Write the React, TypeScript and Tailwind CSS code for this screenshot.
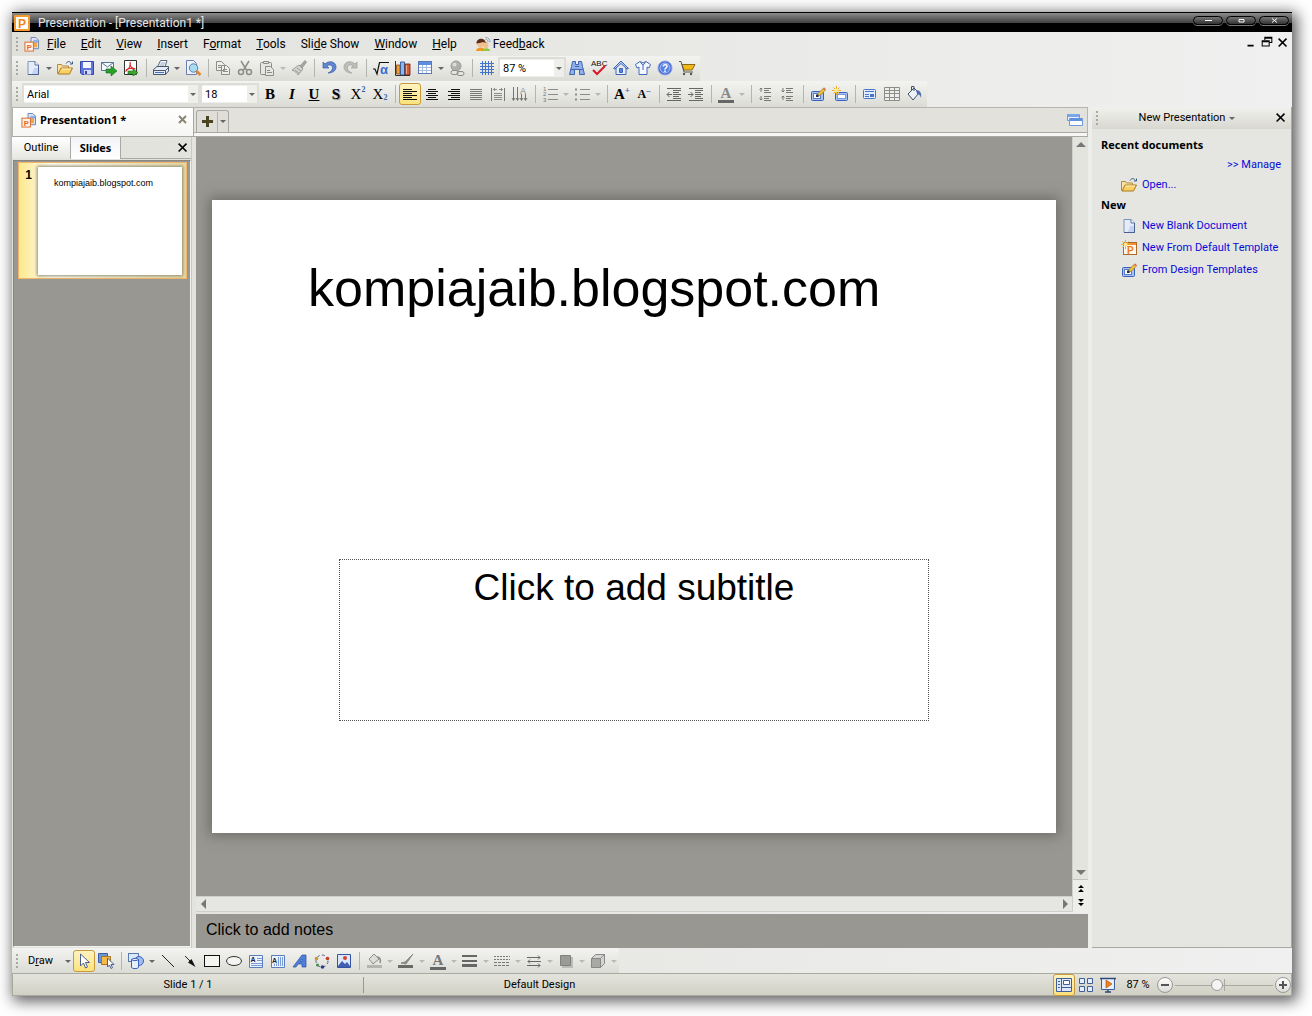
import { clsx } from "clsx";
import type { ReactNode } from "react";

const BLUE = "#3a62b8";
const GREY = "#8c8c88";

const documentShape = (
	<>
		<path d="M3 1.500h7l3.500 3.500v9.500H3z" fill="#e4ecfa" stroke="#8093b8" />
		<path d="M10 1.500V5h3.500" fill="#fff" stroke="#5a6f9e" />
		<path d="M9 8h4v6H7z" fill="#c3d3f0" />
		<path d="M3 14.500h10.500V5" fill="none" stroke="#4a5f8e" />
	</>
);

const folderShape = (
	<>
		<path d="M.5 13.500v-9h4l1 1.500h6v3" fill="#f8e2a4" stroke="#b48a3c" />
		<path d="M1 14L4 8h11.500L12.500 14z" fill="#fbd064" stroke="#a87a20" />
		<path d="M4.500 9h9.500" stroke="#fdeebc" />
		<path d="M9 3.500c1.500-2.500 4-2.500 5.500 0M15.500 1.500v2.500H13" fill="none" stroke="#3d5a80" />
	</>
);

const pencilSlide = (
	<>
		<rect x="1.500" y="5.500" width="12" height="9" rx="1" fill="#a9c2f4" stroke={BLUE} />
		<rect x="3.500" y="7.500" width="7" height="5" fill="#fff" stroke="#5a7cc8" />
		<path d="M7 10.500l1-3 5-5 2 2-5 5z" fill="#f3c23c" stroke="#9a7420" strokeWidth=".7" />
		<path d="M13 2.500l1-1.200 2 2L15 4.500z" fill="#e06a5a" />
		<path d="M6 8.500h2.500V11H6z" fill="#1c2c50" />
	</>
);

const bulb = (
	<>
		<path d="M4.500 0v9M0 4.500h9M1.500 1.500l6 6M7.500 1.500l-6 6" stroke="#e8ac28" />
		<circle cx="4.500" cy="4.500" r="2" fill="#ffe884" />
	</>
);

const icons: Record<string, ReactNode> = {
	app: (
		<>
			<path d="M7.500.5h5l3 3v9h-8z" fill="#dfe8f8" stroke="#6b7fae" />
			<path d="M8 5h6v6H8z" fill="#f4a640" />
			<path d="M10 3h5v3h-5z" fill="#8fb0e8" />
			<rect x="1" y="5.500" width="9" height="9.500" fill="#fff3e8" stroke="#d9662a" />
			<text x="3" y="13.500" fontSize="8" fontWeight="700" fill="#e06a20">P</text>
		</>
	),
	new: documentShape,
	open: folderShape,
	save: (
		<>
			<path d="M1.500 1.500h13v13H3l-1.500-1.500z" fill="#5f74dc" stroke="#3746a8" />
			<path d="M4 2h8v6H4z" fill="#f4f7ff" />
			<path d="M5 10h7v4.500H5z" fill="#d5dcf6" />
			<path d="M6 11h2v3H6z" fill="#3746a8" />
		</>
	),
	mail: (
		<>
			<path d="M.5 2.500h12v8H.5z" fill="#f4f7fc" stroke="#5a7496" />
			<path d="M.5 2.500l6 4.500 6-4.500" fill="none" stroke="#5a7496" />
			<path d="M5 9h5V6l6 5-6 5v-3H5z" fill="#28a028" stroke="#116a1a" strokeWidth=".6" />
		</>
	),
	pdf: (
		<>
			<path d="M1.500.5h12v14h-12z" fill="#fff" stroke="#333" />
			<path d="M7 2c1 3 0 6-4.500 9.500M7 4c0 3 2 4.500 5.500 5M3 10c2-1.500 5-2 9-1" fill="none" stroke="#d8282a" strokeWidth="1.200" />
			<path d="M5 11h5V9l5 3.500-5 3.500v-2H5z" fill="#40a830" stroke="#116a1a" strokeWidth=".6" />
		</>
	),
	print: (
		<>
			<path d="M4.500 7l3-6.500h6.500L12 7z" fill="#fff" stroke="#5c6a80" />
			<path d="M7.500 3h5M6.500 5h5" stroke="#8fa0b8" />
			<path d="M.5 9.500L4 6.500h11.500v4.500l-3 3.500H.5z" fill="#e6ebf4" stroke="#48566c" />
			<path d="M1 10.500h11.500l3-3M12.500 10.500v4" fill="none" stroke="#48566c" />
			<path d="M2 12.500h9" stroke="#3f73c8" />
		</>
	),
	preview: (
		<>
			<path d="M1.500.5h7l3 3v11h-10z" fill="#edf2fb" stroke="#6b7fae" />
			<circle cx="8.500" cy="8" r="4.200" fill="#a8dcf2" stroke="#5d7da4" />
			<path d="M11.500 11l4 4" stroke="#e08428" strokeWidth="2.500" />
		</>
	),
	copy: (
		<g fill="#eeeeeb" stroke={GREY}>
			<path d="M1.500 1.500h5l3 3v6h-8zM6.500 5.500h5l3 3v6h-8z" />
			<path d="M3 5.500h3M3 7.500h3M8 9.500h4M8 11.500h5" />
		</g>
	),
	cut: (
		<g fill="none" stroke={GREY} strokeWidth="1.500">
			<path d="M4 1l5.500 9M12 1L6.500 10" />
			<circle cx="4" cy="12" r="2.500" />
			<circle cx="12" cy="12" r="2.500" />
		</g>
	),
	paste: (
		<g fill="#e6e6e2" stroke={GREY}>
			<rect x="1.500" y="2.500" width="11" height="12" rx="1" />
			<path d="M4.500 3.500v-2h5v2zM6.500 6.500h5l3 3v6h-8z" />
			<path d="M8 10.500h3M8 12.500h5" />
		</g>
	),
	brush: (
		<g stroke={GREY} strokeWidth=".8">
			<path d="M9 6l5-5.500 1.500 1.500L11 8z" fill="#a8a8a4" />
			<path d="M1 10l7-5 4 4-5 6c-1-2-3-4-6-5z" fill="#d4d4d0" />
			<path d="M4 10l4 3M6 8l4 3" />
		</g>
	),
	undo: (
		<path d="M2 2v6h6L6 6c2-2 6-1 5.500 2.500C11 11 9 12 7 13c5 0 8-2.500 8-6C15 1.500 8 0 4 4z" fill="#5f86cf" stroke="#3a5fa8" strokeWidth=".7" />
	),
	redo: (
		<path d="M14 2v6H8l2-2C8 4 4 5 4.500 8.500 5 11 7 12 9 13c-5 0-8-2.500-8-6C1 1.500 8 0 12 4z" fill="#bdbdb9" stroke="#a0a09c" strokeWidth=".7" />
	),
	math: (
		<>
			<path d="M0 9h2l2 5L6.500 2.500H16" fill="none" stroke="#111" strokeWidth="1.200" />
			<text x="7" y="14" fontSize="13" fontWeight="700" fill="#3a6fd0">α</text>
		</>
	),
	chart: (
		<>
			<path d="M1.500 5h3.500V14H1.500z" fill="#f0a030" stroke="#8c4a14" strokeWidth=".8" />
			<path d="M5.500 2h4v13h-4z" fill="#8ab8f0" stroke="#24488c" strokeWidth=".8" />
			<path d="M10 4h5v11h-5z" fill="#d4583a" stroke="#6a2010" strokeWidth=".8" />
			<path d="M.5 1v14.500H15" fill="none" stroke="#333" />
			<path d="M11.500 5v9" stroke="#f2a880" />
		</>
	),
	table: (
		<>
			<rect x="1.500" y="1.500" width="13" height="12" fill="#fff" stroke="#5a78b8" />
			<path d="M2 2h12v3H2z" fill="#5d8ee0" />
			<path d="M2 7.500h12M2 10.500h12M5.500 5v8M9.500 5v8" stroke="#a9bde2" />
		</>
	),
	link: (
		<>
			<circle cx="7" cy="6" r="5" fill="#b0b0ac" stroke="#9c9c98" />
			<circle cx="5.500" cy="4.500" r="2" fill="#dcdcd8" />
			<rect x="2" y="10.500" width="7" height="4" rx="2" fill="#e6e6e2" stroke={GREY} />
			<rect x="8" y="11.500" width="7" height="4" rx="2" fill="none" stroke={GREY} />
		</>
	),
	grid: (
		<path d="M3.500 1v14M6.500 1v14M9.500 1v14M12.500 1v14M1 3.500h14M1 6.500h14M1 9.500h14M1 12.500h14" stroke="#4474c8" />
	),
	find: (
		<g fill="#8fb0ea" stroke="#3f65ae">
			<path d="M3.500 1.500h3v3h3v-3h3l1 5 2 8h-5v-5h-5v5h-5l2-8z" />
			<path d="M2 9.500h4M10 9.500h4M6 6.500h4" />
		</g>
	),
	spelling: (
		<>
			<text x="0" y="6" fontSize="8" fill="#111">ABC</text>
			<path d="M2 10l4 4 8-8" fill="none" stroke="#d81828" strokeWidth="2" />
		</>
	),
	home: (
		<g stroke="#3f65b8">
			<path d="M3 7.500v7h10v-7" fill="#e6effd" />
			<path d="M.5 8.500L8 1l7.500 7.500-1.500.5-6-5.500L2 9z" fill="#b4ccf8" />
			<path d="M6.500 8.500h3v4h-3z" fill="#5b84d8" />
		</g>
	),
	shirt: (
		<>
			<path d="M5 1.500L.5 4.500 2 8l2-1v7.500h8V7l2 1 1.500-3.500-4.500-3L8 3z" fill="#f4f8ff" stroke="#4469b8" />
			<path d="M5.500 2L8 5.500 10.500 2M8 5.500V10" fill="none" stroke="#4469b8" />
		</>
	),
	help: (
		<>
			<circle cx="8" cy="8" r="7" fill="#3f63cf" stroke="#8ba4e8" />
			<circle cx="8" cy="8" r="5" fill="#5b80e4" stroke="#b4c6f6" />
			<text x="5" y="11.500" fontSize="10" fontWeight="700" fill="#fff">?</text>
		</>
	),
	cart: (
		<>
			<path d="M3 4.500h13L13 10H5z" fill="#f2b818" stroke="#8a6a18" />
			<path d="M0 1.500h2L5 12h9" fill="none" stroke="#555" />
			<circle cx="5" cy="14" r="1.200" fill="#555" />
			<circle cx="12" cy="14" r="1.200" fill="#555" />
		</>
	),
	feedback: (
		<>
			<path d="M0 15c0-5 10-5 10 0z" fill="#f09820" />
			<path d="M7 15c0-4 8-4 8 0z" fill="#8cc83c" />
			<circle cx="5" cy="7" r="4" fill="#f2c090" />
			<circle cx="10.500" cy="9" r="2.800" fill="#f2c090" />
			<path d="M.5 7C0 1 9 0 10 5l2 1.500c-3-1-5-1-7-.5z" fill="#5c2c18" />
			<path d="M10 2.500c2 0 3 1.500 3 3M10 .5c3.500 0 5 2.500 5 5" fill="none" stroke="#8a9ab0" />
		</>
	),
	alignLeft: <path d="M1 3.500h9M1 5.500h14M1 7.500h9M1 9.500h14M1 11.500h9M1 13.500h14" stroke="#111" />,
	alignCenter: <path d="M4 3.500h8M2 5.500h12M4 7.500h8M2 9.500h12M4 11.500h8M2 13.500h12" stroke="#111" />,
	alignRight: <path d="M5 3.500h9M2 5.500h12M5 7.500h9M2 9.500h12M5 11.500h9M2 13.500h12" stroke="#111" />,
	justify: <path d="M2 3.500h12M2 5.500h12M2 7.500h12M2 9.500h12M2 11.500h12M2 13.500h12" stroke="#777" />,
	distribute: (
		<>
			<path d="M1.500 2v13M14.500 2v13" stroke="#777" />
			<path d="M3 3.500h4M9 3.500h4M4.500 2v3M11.500 2v3M4 7.500h8M4 9.500h8M4 11.500h8M4 13.500h8" stroke={GREY} />
		</>
	),
	vertical: (
		<>
			<path d="M1.500 1v13M5.500 1v13M9.500 8v6M13.500 8v6" stroke="#777" />
			<path d="M0 12l1.500 2.500L3 12M4 12l1.500 2.500L7 12M8 12l1.500 2.500L11 12M12 12l1.500 2.500L15 12" fill="none" stroke="#777" />
			<text x="8" y="7.500" fontSize="9" fill={GREY}>A</text>
		</>
	),
	numbered: (
		<>
			<path d="M6 3.500h10M6 8.500h10M6 13.500h10" stroke={GREY} />
			<text x="1" y="5" fontSize="6" fill="#777">1</text>
			<text x="1" y="10" fontSize="6" fill="#777">2</text>
			<text x="1" y="15.500" fontSize="6" fill="#777">3</text>
		</>
	),
	bullets: (
		<>
			<path d="M6 3.500h10M6 8.500h10M6 13.500h10" stroke={GREY} />
			<path d="M1 2.500h2v2H1zM1 7.500h2v2H1zM1 12.500h2v2H1z" fill={GREY} />
		</>
	),
	outdent: (
		<path d="M1 2.500h14M7 4.500h8M7 6.500h6M7 8.500h8M7 10.500h6M7 12.500h8M1 14.500h14M1 8.500h5M3.500 6L1 8.500 3.500 11" fill="none" stroke="#666" />
	),
	indent: (
		<path d="M1 2.500h14M7 4.500h8M7 6.500h6M7 8.500h8M7 10.500h6M7 12.500h8M1 14.500h14M0 8.500h5M2.500 6L5 8.500 2.500 11" fill="none" stroke="#666" />
	),
	spaceUp: (
		<path d="M6 2.500h7M6 4.500h5M6 6.500h7M6 10.500h7M6 12.500h5M6 14.500h7M3 2v4M1.500 3.500L3 2l1.500 1.500M3 10v4M1.500 12.500L3 14l1.500-1.500" fill="none" stroke="#777" />
	),
	spaceDown: (
		<path d="M6 2.500h7M6 4.500h5M6 6.500h7M6 10.500h7M6 12.500h5M6 14.500h7M3 2v4M1.500 4.500L3 6l1.500-1.500M3 10v4M1.500 11.500L3 10l1.500 1.500" fill="none" stroke="#777" />
	),
	design: pencilSlide,
	newSlide: (
		<>
			<rect x="3.500" y="6.500" width="12" height="8" rx="1" fill="#a9c2f4" stroke={BLUE} />
			<rect x="5.500" y="8.500" width="8" height="4" fill="#fff" stroke="#7a98d8" />
			{bulb}
		</>
	),
	layout: (
		<>
			<rect x="1.500" y="3.500" width="12" height="9" rx="1" fill="#e2ecfd" stroke="#4a74cc" />
			<path d="M3 5.500h9M3 8.500h4M3 10.500h4" stroke="#4a74cc" />
			<path d="M8 8h4v3H8z" fill="#4a74cc" />
		</>
	),
	tableGrey: (
		<path d="M.5 1.500h15v13H.5zM1 4.500h14M1 7.500h14M1 11.500h14M5.500 1v13M10.500 1v13" fill="#eeeeec" stroke={GREY} />
	),
	bucket: (
		<>
			<path d="M2 8l6-6 5 5-6 7z" fill="#eef3fb" stroke="#3f5068" />
			<path d="M8 5V.5H5.500V5" fill="none" stroke="#3f5068" />
			<path d="M10 4c4 0 6 3 5 8-1-3-2-4-4-4z" fill="#4c6fa8" />
		</>
	),
	cursor: (
		<path d="M4.500 1v12l3-3 2 5 2-1-2-4.500h4z" fill="#fff" stroke="#4a5f8c" />
	),
	selectObjects: (
		<>
			<path d="M.5.5h9v9h-9z" fill="#6d94d4" stroke="#3a5f9e" />
			<path d="M3.500 3.500h9v8h-9z" fill="#f5bb4a" stroke="#a87420" />
			<path d="M9.500 5v9l2-2 1.500 3.500 1.500-.8-1.500-3.200H16z" fill="#fff" stroke="#4a5f8c" />
		</>
	),
	shapes: (
		<>
			<rect x=".5" y=".5" width="10" height="8" fill="#dbe6f9" stroke="#5878b0" />
			<circle cx="11" cy="8" r="4.500" fill="#9fbcf0" stroke={BLUE} />
			<path d="M3.500 6.500v8c1 1.500 6 1.500 7 0v-8c-1-1.500-6-1.500-7 0z" fill="#e6eefc" stroke={BLUE} />
			<path d="M3.500 6.500c1 1.500 6 1.500 7 0" fill="none" stroke={BLUE} />
		</>
	),
	line: <path d="M2 2l12 12" stroke="#222" />,
	arrow: (
		<>
			<path d="M3 3l9 9" stroke="#222" />
			<path d="M13.500 14L6 9.500 9.500 6z" fill="#111" />
		</>
	),
	rect: <rect x=".5" y="2.500" width="15" height="11" fill="#f4f4f2" stroke="#111" />,
	ellipse: <ellipse cx="8" cy="8" rx="7.500" ry="4.500" fill="#f4f4f2" stroke="#333" />,
	textbox: (
		<>
			<path d="M1.500 2.500h13v12h-13z" fill="#edf3fd" stroke="#5a7cc0" />
			<path d="M9 5.500h5M9 7.500h5M3 10.500h11M3 12.500h11" stroke="#7a9ad8" />
			<text x="2.500" y="9" fontSize="7" fontWeight="700" fill="#223">A</text>
		</>
	),
	textboxVertical: (
		<>
			<path d="M1.500 2.500h13v12h-13z" fill="#edf3fd" stroke="#5a7cc0" />
			<path d="M8.500 4v9M10.500 4v9M12.500 4v9M4.500 10.500v2.500M6.500 10.500v2.500" stroke="#7a9ad8" />
			<text x="2" y="9.500" fontSize="7" fontWeight="700" fill="#223">A</text>
		</>
	),
	wordArt: (
		<path d="M1 14L10 2h4v12h-4v-3H6l-2 3zM8 8.500h2V6z" fill="#5080dc" stroke="#2a4c9e" strokeWidth=".7" fillRule="evenodd" />
	),
	diagram: (
		<>
			<circle cx="8" cy="8" r="6" fill="none" stroke="#4a5f8c" strokeDasharray="3 2.500" />
			<circle cx="2.500" cy="5.500" r="1.800" fill="#c89830" />
			<circle cx="13.500" cy="5.500" r="1.800" fill="#c83c28" />
			<circle cx="3.500" cy="12" r="1.500" fill="#4a8850" />
			<circle cx="8.500" cy="14" r="1.800" fill="#283c8c" />
		</>
	),
	picture: (
		<>
			<path d="M1.500 1.500h13v13h-13z" fill="#dbe7fb" stroke="#3553a4" />
			<path d="M2 13l4-5 3 3 2-2 3 4v1H2z" fill="#3f5fb0" />
			<circle cx="9" cy="5" r="2" fill="#d84030" />
		</>
	),
	fillGrey: (
		<>
			<path d="M3 6l5-5 5 5-6 5z" fill="#dcdcd8" stroke={GREY} />
			<path d="M11 4c3 0 4 3 3 6" fill="none" stroke={GREY} strokeWidth="1.500" />
			<path d="M1 12h15v3H1z" fill="#b4b4b0" />
		</>
	),
	penGrey: (
		<>
			<path d="M3 10l4-1 8-8-7 10z" fill={GREY} stroke={GREY} />
			<path d="M0 12h15v3H0z" fill="#6a6a66" />
		</>
	),
	lineWidth: (
		<>
			<path d="M0 3h15M0 8h15" stroke="#666" strokeWidth="2" />
			<path d="M0 12.500h15" stroke="#666" strokeWidth="3" />
		</>
	),
	dashes: (
		<>
			<path d="M0 3.500h16M0 6.500h16" stroke="#777" strokeDasharray="2 1" />
			<path d="M0 9.500h16M0 12.500h16" stroke="#777" strokeDasharray="3 1" />
		</>
	),
	arrows: (
		<path d="M1 4.500h13M12 2.500l2 2-2 2M15 8.500H2M4 6.500l-2 2 2 2M1 12.500h13M12 10.500l2 2-2 2" fill="none" stroke="#666" />
	),
	shadow: (
		<>
			<path d="M4 4h11v11H4z" fill="#bbbbb7" />
			<path d="M2.500 2.500h10v10h-10z" fill="#9a9a96" stroke="#808080" />
		</>
	),
	cube: (
		<>
			<path d="M1.500 5.500l4-4h9v9l-4 4h-9z" fill="#d4d4d0" stroke="#888" />
			<path d="M1.500 5.500h9v9h-9z" fill="#a8a8a4" stroke="#888" />
			<path d="M10.500 5.500l4-4" stroke="#888" />
		</>
	),
	template: (
		<>
			<rect x="2.500" y="2.500" width="13" height="12" fill="#fff8ec" stroke="#b06a28" />
			<path d="M3 3h12v2H3z" fill="#f09030" />
			<text x="6" y="13.500" fontSize="10" fontWeight="700" fill="#f07818">P</text>
			{bulb}
		</>
	),
	windows: (
		<>
			<path d="M.5 2.500h12v6H.5z" fill="#e8f0fc" stroke="#6f9ad8" />
			<path d="M1 2h11v3H1z" fill="#78a6e6" />
			<path d="M2.500 6.500h13v7h-13z" fill="#fff" stroke="#6f9ad8" />
			<path d="M3 6h12v3H3z" fill="#5f92dc" />
		</>
	),
	normalView: (
		<>
			<path d="M.5 1.500h15v13H.5z" fill="#dfe8f8" stroke="#3f5f98" />
			<path d="M5.500 2v12M6 10.500h9" stroke="#3f5f98" />
			<path d="M7.500 3.500h6v4h-6z" fill="#fff" stroke="#3f5f98" />
			<path d="M2 4.500h2M2 7.500h2M2 10.500h2" stroke="#3f5f98" />
		</>
	),
	sorterView: (
		<path d="M1.500 1.500h5v5h-5zM9.500 1.500h5v5h-5zM1.500 9.500h5v5h-5zM9.500 9.500h5v5h-5z" fill="#e6eefb" stroke="#3f5f98" />
	),
	showView: (
		<>
			<path d="M1.500 1.500h13v11h-13z" fill="#e6f0fc" stroke="#3f5f98" />
			<path d="M0 1.500h16M5 15h6M8 13v2" stroke="#2f4878" strokeWidth="1.500" />
			<path d="M6 3l6 4-6 4z" fill="#f08018" stroke="#a84c10" strokeWidth=".6" />
		</>
	),
	restore: (
		<path d="M5.500 4.500v-3h8v6h-3M2.500 5.500h8v6h-8zM2.500 6.500h8M5.500 2.500h8" fill="none" stroke="#000" strokeWidth="1.200" />
	),
	close: <path d="M3 3l9 9M12 3l-9 9" stroke="#000" strokeWidth="1.800" />,
	minimize: <path d="M4 11h7" stroke="#000" strokeWidth="2" />,
};

function Icon({ name, className = "h-4 w-4" }: { name: string; className?: string }) {
	return (
		<svg
			viewBox="0 0 16 16"
			className={clsx("shrink-0 overflow-visible font-['Liberation_Sans',sans-serif] font-normal", className)}
			aria-hidden="true"
		>
			{icons[name]}
		</svg>
	);
}

type ToolProps = {
	label: string;
	icon?: string;
	active?: boolean;
	children?: ReactNode;
};

function Tool({ label, icon, active, children }: ToolProps) {
	return (
		<button
			type="button"
			aria-label={label}
			className={clsx(
				"flex h-[22px] w-[22px] shrink-0 items-center justify-center rounded-[3px] font-['Liberation_Serif',serif] text-[15px] leading-4 font-bold text-black",
				active && "border border-[#c99a3c] bg-linear-to-b from-[#fdf3c0] to-[#fce27c]",
			)}
		>
			{icon ? <Icon name={icon} /> : children}
		</button>
	);
}

function Caret({ label, muted }: { label: string; muted?: boolean }) {
	return (
		<button type="button" aria-label={label} className="flex h-[22px] w-2.5 shrink-0 items-center justify-center">
			<svg viewBox="0 0 6 3" className="h-[3px] w-1.5" aria-hidden="true">
				<path d="M0 0h6L3 3z" fill={muted ? "#b8b8b4" : "#666"} />
			</svg>
		</button>
	);
}

function Separator() {
	return (
		<div className="flex w-2 shrink-0 justify-center">
			<div className="h-[18px] w-px bg-[#b4b5ae]" />
		</div>
	);
}

function Grip() {
	return (
		<div className="mx-1 flex shrink-0 flex-col gap-0.5">
			{[0, 1, 2, 3].map((dot) => (
				<div key={dot} className="h-0.5 w-0.5 bg-[#a9a9a4]" />
			))}
		</div>
	);
}

function Combo({ label, value, className }: { label: string; value: string; className: string }) {
	return (
		<div className={clsx("flex h-[22px] shrink-0 items-center border-2 border-[#deded9] bg-[#eeeeeb]", className)}>
			<select
				aria-label={label}
				defaultValue={value}
				className="h-4 min-w-0 flex-1 appearance-none bg-white px-[3px] pt-px text-[11px] leading-4 text-black outline-none"
			>
				<option>{value}</option>
			</select>
			<Caret label={`${label} list`} />
		</div>
	);
}

const toolbar = "flex w-fit items-center bg-linear-to-b from-[#f3f3f1] to-[#dcdcd6]";

function MenuItem({ text, hot }: { text: string; hot: number }) {
	return (
		<button type="button" className="h-6 pr-[7px] pl-2 whitespace-nowrap">
			{text.slice(0, hot)}
			<u>{text[hot]}</u>
			{text.slice(hot + 1)}
		</button>
	);
}

const menus = [
	{ text: "File", hot: 0 },
	{ text: "Edit", hot: 0 },
	{ text: "View", hot: 0 },
	{ text: "Insert", hot: 0 },
	{ text: "Format", hot: 1 },
	{ text: "Tools", hot: 0 },
	{ text: "Slide Show", hot: 3 },
	{ text: "Window", hot: 0 },
	{ text: "Help", hot: 0 },
];

function TitleBar() {
	return (
		<header className="flex h-5 items-center border-t border-black bg-linear-to-b from-[#8c8c8c] from-0% via-[#454545] via-50% to-black to-55% text-[#e4e4e4]">
			<svg
				viewBox="0 0 16 16"
				className="ml-0.5 h-4 w-4 font-['Liberation_Sans',sans-serif]"
				aria-hidden="true"
			>
				<rect width="16" height="16" rx="1" fill="#f29a2c" />
				<rect x="2" y="2" width="12" height="12" fill="#fff" />
				<text x="4" y="12.500" fontSize="12" fontWeight="700" fill="#f08418">P</text>
			</svg>
			<h1 className="ml-2 flex-1 text-[12px] leading-4">Presentation - [Presentation1 *]</h1>
			<div className="mr-[3px] mb-1 flex gap-[3px]">
				{["Minimize", "Maximize", "Close"].map((label) => (
					<button
						key={label}
						type="button"
						aria-label={label}
						className="flex h-[9px] w-[30px] items-center justify-center rounded-full border border-black bg-linear-to-b from-[#777] to-[#333] shadow-[0_1px_0_#777]"
					>
						<svg viewBox="0 0 7 5" className="h-[5px] w-[7px]" aria-hidden="true">
							{label === "Minimize" && <path d="M0 2.500h7" stroke="#fff" />}
							{label === "Maximize" && <path d="M1 1.500h5v2.500H1z" fill="none" stroke="#fff" />}
							{label === "Close" && <path d="M1 .5l5 4M6 .5l-5 4" stroke="#fff" />}
						</svg>
					</button>
				))}
			</div>
		</header>
	);
}

function MenuBar() {
	return (
		<nav className="flex h-6 items-center text-[12px]">
			<Grip />
			<Icon name="app" className="ml-0.5 h-[15px] w-[15px]" />
			{menus.map((menu) => (
				<MenuItem key={menu.text} {...menu} />
			))}
			<button type="button" className="ml-3 flex items-center gap-0.5">
				<Icon name="feedback" className="h-[15px] w-[15px]" />
				<span>
					Feed<u>b</u>ack
				</span>
			</button>
			<div className="mr-0.5 mb-0.5 ml-auto flex gap-0.5">
				{["minimize", "restore", "close"].map((name) => (
					<button key={name} type="button" aria-label={`${name} document`}>
						<Icon name={name} className="h-3.5 w-3.5" />
					</button>
				))}
			</div>
		</nav>
	);
}

function StandardToolbar() {
	return (
		<div className={clsx(toolbar, "h-[25px] pr-0.5 pb-px")}>
			<Grip />
			<Tool label="New" icon="new" />
			<Caret label="New options" />
			<Tool label="Open" icon="open" />
			<Tool label="Save" icon="save" />
			<Tool label="Send mail" icon="mail" />
			<Tool label="Export PDF" icon="pdf" />
			<Separator />
			<Tool label="Print" icon="print" />
			<Caret label="Print options" />
			<Tool label="Preview" icon="preview" />
			<Separator />
			<Tool label="Copy" icon="copy" />
			<Tool label="Cut" icon="cut" />
			<Tool label="Paste" icon="paste" />
			<Caret label="Paste options" muted />
			<Tool label="Format painter" icon="brush" />
			<Separator />
			<Tool label="Undo" icon="undo" />
			<Tool label="Redo" icon="redo" />
			<Separator />
			<Tool label="Equation" icon="math" />
			<Tool label="Chart" icon="chart" />
			<Tool label="Table" icon="table" />
			<Caret label="Table options" />
			<Tool label="Hyperlink" icon="link" />
			<Separator />
			<Tool label="Grid" icon="grid" />
			<Combo label="Zoom" value="87 %" className="w-[68px]" />
			<Tool label="Find" icon="find" />
			<Tool label="Spelling" icon="spelling" />
			<Tool label="Home page" icon="home" />
			<Tool label="Merchandise" icon="shirt" />
			<Tool label="Help" icon="help" />
			<Tool label="Shop" icon="cart" />
		</div>
	);
}

function FormatToolbar() {
	return (
		<div className={clsx(toolbar, "h-[26px] pr-0.5")}>
			<Grip />
			<Combo label="Font" value="Arial" className="w-[178px]" />
			<Combo label="Font size" value="18" className="w-[59px]" />
			<Tool label="Bold">B</Tool>
			<Tool label="Italic">
				<i>I</i>
			</Tool>
			<Tool label="Underline">
				<u>U</u>
			</Tool>
			<Tool label="Shadow">
				<span className="[text-shadow:1px_1px_1px_#888]">S</span>
			</Tool>
			<Tool label="Superscript">
				<span className="font-normal">X</span>
				<span className="mb-2 text-[8px] leading-2 text-[#3a62b8]">2</span>
			</Tool>
			<Tool label="Subscript">
				<span className="font-normal">X</span>
				<span className="mt-2 text-[8px] leading-2 text-[#3a62b8]">2</span>
			</Tool>
			<Separator />
			<Tool label="Align left" icon="alignLeft" active />
			<Tool label="Center" icon="alignCenter" />
			<Tool label="Align right" icon="alignRight" />
			<Tool label="Justify" icon="justify" />
			<Tool label="Distribute" icon="distribute" />
			<Tool label="Vertical text" icon="vertical" />
			<Separator />
			<Tool label="Numbering" icon="numbered" />
			<Caret label="Numbering options" muted />
			<Tool label="Bullets" icon="bullets" />
			<Caret label="Bullet options" muted />
			<Separator />
			<Tool label="Grow font">
				<span>A</span>
				<span className="mb-2 text-[9px] leading-2 text-[#3a62b8]">+</span>
			</Tool>
			<Tool label="Shrink font">
				<span className="text-[12px]">A</span>
				<span className="mb-2 text-[9px] leading-2 text-[#3a62b8]">–</span>
			</Tool>
			<Separator />
			<Tool label="Decrease indent" icon="outdent" />
			<Tool label="Increase indent" icon="indent" />
			<Separator />
			<Tool label="Font color">
				<span className="w-4 border-b-3 border-[#666] leading-[14px] text-[#888]">A</span>
			</Tool>
			<Caret label="Font color options" muted />
			<Separator />
			<Tool label="Increase spacing" icon="spaceUp" />
			<Tool label="Decrease spacing" icon="spaceDown" />
			<Separator />
			<Tool label="Slide design" icon="design" />
			<Tool label="New slide" icon="newSlide" />
			<Separator />
			<Tool label="Slide layout" icon="layout" />
			<Tool label="Table grid" icon="tableGrey" />
			<Tool label="Background" icon="bucket" />
		</div>
	);
}

function DocumentTabs() {
	return (
		<div className="flex h-[29px] items-end border border-b-0 border-[#b5b5ae] bg-[#e2e1dc]">
			<div className="flex h-full w-[181px] items-center border-r border-[#a9a9a2] bg-linear-to-b from-white to-[#f6f6f4] pb-1 pl-2">
				<Icon name="app" className="h-[15px] w-[15px]" />
				<span className="ml-1 flex-1 font-['Open_Sans',sans-serif] text-[11px] leading-4 font-bold">Presentation1 *</span>
				<button type="button" aria-label="Close tab" className="mr-[3px]">
					<svg viewBox="0 0 14 14" className="h-3.5 w-3.5" aria-hidden="true">
						<path d="M3 3l7 7M10 3l-7 7" stroke="#8a8672" strokeWidth="2" />
					</svg>
				</button>
			</div>
			<div className="flex h-full flex-1 flex-col justify-end">
				<div className="flex flex-1 items-end justify-between pr-1 pl-0.5">
					<div className="flex h-[22px] items-center rounded-t-[3px] border border-b-0 border-[#a9a9a2] bg-[#dfded8]">
						<button type="button" aria-label="New tab" className="flex w-5 justify-center">
							<svg viewBox="0 0 11 11" className="h-[11px] w-[11px]" aria-hidden="true">
								<path d="M5.500 0v11M0 5.500h11" stroke="#4a4520" strokeWidth="3" />
							</svg>
						</button>
						<div className="h-5 w-px bg-[#b5b5ae]" />
						<Caret label="Tab list" />
					</div>
					<button type="button" aria-label="Arrange windows" className="mb-1">
						<Icon name="windows" />
					</button>
				</div>
				<div className="h-1 border-t border-[#a9a9a2] bg-[#f6f6f4]" />
			</div>
		</div>
	);
}

function SlidePanel() {
	return (
		<aside className="flex w-[180px] shrink-0 flex-col border-r border-[#c9c9c2]">
			<div className="flex h-[22px] text-[11px]">
				<button type="button" className="w-[59px] border-r border-[#a9a9a2] bg-linear-to-b from-white to-[#e6e6e1]">
					Outline
				</button>
				<button
					type="button"
					className="w-[50px] border-r border-[#a9a9a2] bg-linear-to-b from-[#f2f4f8] to-white font-['Open_Sans',sans-serif] font-bold"
				>
					Slides
				</button>
				<div className="flex flex-1 items-center justify-end border-b border-[#a9a9a2] pr-px">
					<button type="button" aria-label="Close panel">
						<Icon name="close" className="h-3.5 w-3.5" />
					</button>
				</div>
			</div>
			<div className="my-px ml-px flex-1 border border-[#88867f] border-r-[#f2f2ee] border-b-[#f2f2ee] bg-[#999792] pt-px pr-[3px] pl-1">
				<button
					type="button"
					className="flex w-full border border-[#efb56a] bg-linear-to-r from-[#fde88c] via-[#fffdf2] via-20% to-[#e8d9a4] pt-1 pr-1 pb-[3px]"
				>
					<span className="w-[19px] pr-1.5 text-right font-['Liberation_Sans',sans-serif] text-[12px] leading-4 font-bold">
						1
					</span>
					<span className="block aspect-4/3 flex-1 bg-white pt-2.5 pl-4 text-left font-['Liberation_Sans',sans-serif] text-[9px] leading-3 shadow-[0_0_3px_1px_#8a8a70]">
						kompiajaib.blogspot.com
					</span>
				</button>
			</div>
		</aside>
	);
}

function ScrollArrow({ label, d }: { label: string; d: string }) {
	return (
		<button type="button" aria-label={label} className="flex h-[15px] w-[15px] items-center justify-center">
			<svg viewBox="0 0 10 10" className="h-2.5 w-2.5" aria-hidden="true">
				<path d={d} fill="currentColor" />
			</svg>
		</button>
	);
}

function Editor() {
	return (
		<main className="ml-1 flex min-w-0 flex-1 flex-col">
			<div className="flex flex-1">
				<div className="flex min-w-0 flex-1 flex-col">
					<div className="flex flex-1 flex-col justify-center bg-[#999792] px-4">
						<section className="aspect-4/3 bg-white pt-[58px] font-['Liberation_Sans',sans-serif] text-black shadow-[0_0_12px_3px_#706e69]">
							<h2 className="pl-24 text-[52px] leading-[60px]">kompiajaib.blogspot.com</h2>
							<div className="mx-auto mt-[241px] h-[162px] w-[70%] border border-dotted border-[#555] pt-1.5 text-center text-[37px] leading-[44px]">
								Click to add subtitle
							</div>
						</section>
					</div>
					<div className="flex h-4 items-center justify-between border-y border-[#d0d0ca] bg-[#e6e6e2] text-[#777]">
						<ScrollArrow label="Scroll left" d="M7 0v10L2 5z" />
						<ScrollArrow label="Scroll right" d="M3 0v10l5-5z" />
					</div>
				</div>
				<div className="flex w-4 flex-col items-center border-l border-[#d0d0ca] bg-[#e4e4df] text-[#777]">
					<ScrollArrow label="Scroll up" d="M0 7h10L5 2z" />
					<div className="flex-1" />
					<ScrollArrow label="Scroll down" d="M0 3h10L5 8z" />
					<div className="border-t border-[#c4c4be] bg-[#eeeeeb] pb-0.5 text-black">
						<ScrollArrow label="Previous slide" d="M2 5h6L5 2zM2 9h6L5 6z" />
						<ScrollArrow label="Next slide" d="M2 1h6L5 4zM2 5h6L5 8z" />
					</div>
				</div>
			</div>
			<textarea
				aria-label="Notes"
				defaultValue="Click to add notes"
				className="mt-0.5 h-[34px] resize-none bg-[#999792] px-2.5 py-1.5 font-['Liberation_Sans',sans-serif] text-base leading-5 text-black outline-none"
			/>
		</main>
	);
}

const newLinks = [
	{ icon: "new", text: "New Blank Document" },
	{ icon: "template", text: "New From Default Template" },
	{ icon: "design", text: "From Design Templates" },
];

function TaskLink({ icon, text }: { icon: string; text: string }) {
	return (
		<a href="#" className="flex h-[22px] items-center gap-[5px] pl-[29px] whitespace-nowrap text-[#0a0ad8]">
			<Icon name={icon} />
			{text}
		</a>
	);
}

function TaskPane() {
	return (
		<aside className="ml-1 flex w-[200px] shrink-0 flex-col border-r border-b border-[#a9a9a2] bg-[#e5e6e1] text-[11px] leading-4">
			<div className="flex h-[22px] items-center bg-linear-to-b from-[#f1f1ee] to-[#d8d7d0]">
				<Grip />
				<button type="button" className="flex flex-1 items-center justify-center gap-0.5">
					New Presentation
					<svg viewBox="0 0 10 3" className="h-[3px] w-2.5" aria-hidden="true">
						<path d="M2 0h6L5 3z" fill="#666" />
					</svg>
				</button>
				<button type="button" aria-label="Close pane" className="mr-[3px]">
					<Icon name="close" className="h-3.5 w-3.5" />
				</button>
			</div>
			<h3 className="mt-2 pl-[9px] font-['Open_Sans',sans-serif] font-bold">Recent documents</h3>
			<a href="#" className="mt-1 mr-2.5 mb-px self-end text-[#0a0ad8]">
				&gt;&gt; Manage
			</a>
			<TaskLink icon="open" text="Open..." />
			<h3 className="mt-px mb-0.5 pl-[9px] font-['Open_Sans',sans-serif] font-bold">New</h3>
			{newLinks.map((link) => (
				<TaskLink key={link.text} {...link} />
			))}
		</aside>
	);
}

function DrawToolbar() {
	return (
		<div className={clsx(toolbar, "h-[25px] pt-px")}>
			<Grip />
			<button type="button" className="ml-1.5 w-[35px] text-left text-[11px]">
				D<u>r</u>aw
			</button>
			<Caret label="Draw options" />
			<Tool label="Select" icon="cursor" active />
			<Tool label="Select objects" icon="selectObjects" />
			<Separator />
			<Tool label="Shapes" icon="shapes" />
			<Caret label="Shape options" />
			<Tool label="Line" icon="line" />
			<Tool label="Arrow" icon="arrow" />
			<Tool label="Rectangle" icon="rect" />
			<Tool label="Ellipse" icon="ellipse" />
			<Tool label="Text box" icon="textbox" />
			<Tool label="Vertical text box" icon="textboxVertical" />
			<Tool label="Text art" icon="wordArt" />
			<Tool label="Diagram" icon="diagram" />
			<Tool label="Picture" icon="picture" />
			<Separator />
			<Tool label="Fill color" icon="fillGrey" />
			<Caret label="Fill options" muted />
			<Tool label="Line color" icon="penGrey" />
			<Caret label="Line color options" muted />
			<Tool label="Text color">
				<span className="w-4 border-b-3 border-[#666] leading-[14px] text-[#777]">A</span>
			</Tool>
			<Caret label="Text color options" muted />
			<Tool label="Line width" icon="lineWidth" />
			<Caret label="Line width options" muted />
			<Tool label="Dash style" icon="dashes" />
			<Caret label="Dash options" muted />
			<Tool label="Arrow style" icon="arrows" />
			<Caret label="Arrow options" muted />
			<Tool label="Shadow style" icon="shadow" />
			<Caret label="Shadow options" muted />
			<Tool label="3D style" icon="cube" />
			<Caret label="3D options" muted />
		</div>
	);
}

function ZoomButton({ label, d }: { label: string; d: string }) {
	return (
		<button
			type="button"
			aria-label={label}
			className="flex h-4 w-4 items-center justify-center rounded-full border border-[#999] bg-linear-to-b from-white to-[#dcdcd8]"
		>
			<svg viewBox="0 0 8 8" className="h-2 w-2" aria-hidden="true">
				<path d={d} stroke="#555" strokeWidth="2" />
			</svg>
		</button>
	);
}

function StatusBar() {
	return (
		<footer className="flex h-[23px] items-center border border-[#a9a99e] bg-linear-to-b from-[#e4e4de] to-[#d0d0c4] pt-px text-[11px] leading-4">
			<div className="w-[351px] border-r border-[#8c98a4] text-center">Slide 1 / 1</div>
			<div className="w-[351px] text-center">Default Design</div>
			<div className="ml-auto flex items-center">
				<Tool label="Normal view" icon="normalView" active />
				<Tool label="Slide sorter" icon="sorterView" />
				<Tool label="Slide show" icon="showView" />
				<span className="w-[38px] text-center">87 %</span>
				<ZoomButton label="Zoom out" d="M0 4h8" />
				<div className="relative mx-0.5 flex items-center">
					<div className="absolute left-1/2 h-3 w-px bg-[#a9a99e]" />
					<input
						type="range"
						aria-label="Zoom level"
						min={0}
						max={100}
						defaultValue={42}
						className="relative h-px w-[98px] appearance-none bg-[#a9a99e] [&::-webkit-slider-thumb]:h-3 [&::-webkit-slider-thumb]:w-3 [&::-webkit-slider-thumb]:appearance-none [&::-webkit-slider-thumb]:rounded-full [&::-webkit-slider-thumb]:border [&::-webkit-slider-thumb]:border-[#999] [&::-webkit-slider-thumb]:bg-[#f4f4f2]"
					/>
				</div>
				<ZoomButton label="Zoom in" d="M0 4h8M4 0v8" />
			</div>
		</footer>
	);
}

export default function App() {
	return (
		<div className="flex min-h-screen bg-white pt-3 pr-5 pb-5 pl-3 font-[Roboto,sans-serif] text-black">
			<div className="flex min-w-0 flex-1 flex-col bg-linear-to-r from-[#e1e1dc] to-[#f0f0f0] shadow-[3px_3px_14px_2px_rgba(0,0,0,0.65)]">
				<TitleBar />
				<MenuBar />
				<StandardToolbar />
				<FormatToolbar />
				<div className="flex flex-1">
					<div className="flex min-w-0 flex-1 flex-col">
						<DocumentTabs />
						<div className="flex flex-1 border-t border-[#a9a9a2]">
							<SlidePanel />
							<Editor />
						</div>
					</div>
					<TaskPane />
				</div>
				<DrawToolbar />
				<StatusBar />
			</div>
		</div>
	);
}
